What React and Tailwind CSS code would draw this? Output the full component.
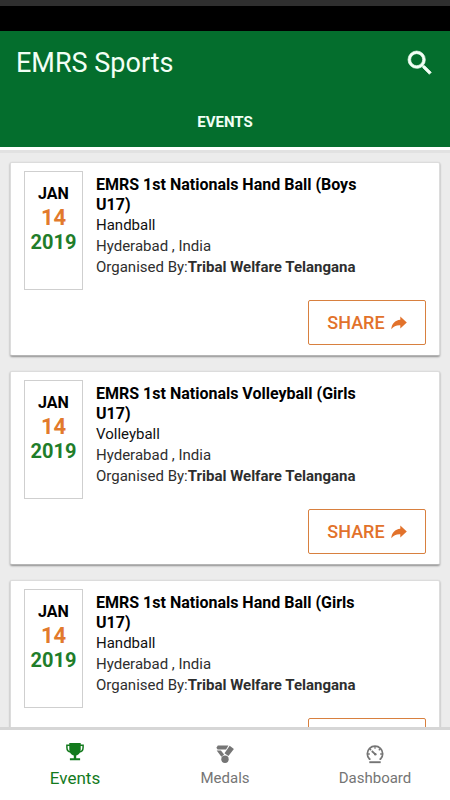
import React from 'react';

const events = [
  {
    id: 1,
    title: 'EMRS 1st Nationals Hand Ball (Boys U17)',
    sport: 'Handball',
    place: 'Hyderabad , India',
    organiser: 'Tribal Welfare Telangana',
    date: { month: 'JAN', day: '14', year: '2019' },
  },
  {
    id: 2,
    title: 'EMRS 1st Nationals Volleyball (Girls U17)',
    sport: 'Volleyball',
    place: 'Hyderabad , India',
    organiser: 'Tribal Welfare Telangana',
    date: { month: 'JAN', day: '14', year: '2019' },
  },
  {
    id: 3,
    title: 'EMRS 1st Nationals Hand Ball (Girls U17)',
    sport: 'Handball',
    place: 'Hyderabad , India',
    organiser: 'Tribal Welfare Telangana',
    date: { month: 'JAN', day: '14', year: '2019' },
  },
];

const SearchIcon = () => (
  <svg className="w-8 h-8" viewBox="0 0 24 24" fill="currentColor" stroke="currentColor" strokeWidth="0.5" aria-hidden="true">
    <path d="M15.5 14h-.79l-.28-.27A6.47 6.47 0 0 0 16 9.5 6.5 6.5 0 1 0 9.5 16c1.61 0 3.09-.59 4.23-1.57l.27.28v.79l5 4.99L20.49 19l-4.99-5zm-6 0a4.5 4.5 0 1 1 0-9 4.5 4.5 0 0 1 0 9z" />
  </svg>
);

const ShareIcon = () => (
  <svg className="w-4 h-4" viewBox="0 0 16 16" fill="currentColor" aria-hidden="true">
    <path d="M9.300 1.500l6.500 6-6.500 6v-3.300C5.500 10 2.600 11 .300 14.300.700 8.700 4 5.200 9.300 4.700z" />
  </svg>
);

const TrophyIcon = () => (
  <svg className="w-5 h-5" viewBox="0 0 20 20" fill="currentColor" aria-hidden="true">
    <path d="M4.300 1h11.400v6.500c0 3-2.200 5.500-4.500 6v2.700h3.900v2.100H4.900v-2.100h3.900v-2.700c-2.300-.5-4.500-3-4.500-6z" />
    <path
      fill="none"
      stroke="currentColor"
      strokeWidth="1.500"
      d="M5 3.200H1.900v2.300c0 2.600 1.500 4.200 4 4.600M15 3.200h3.100v2.300c0 2.600-1.500 4.200-4 4.600"
    />
  </svg>
);

const MedalIcon = () => (
  <svg className="w-5 h-5" viewBox="0 0 20 20" fill="currentColor" aria-hidden="true">
    <path d="M2.800 1.500h10.600l-2.300 3.900H2.600L1.400 3.700z" />
    <path d="M14.700 1.700l4.200 3.400-5.500 6.900-3.900-2.800z" />
    <path d="M1.700 6.400h4.200l3.200 4.200-2.700 2.200z" />
    <circle cx="10" cy="15.300" r="3.700" />
  </svg>
);

const GaugeIcon = () => (
  <svg className="w-5 h-5" viewBox="0 0 20 20" fill="none" stroke="currentColor" aria-hidden="true">
    <path strokeWidth="1.700" d="M5.500 15.200h-1a7.700 7.700 0 1 1 11 0h-1" />
    <path strokeWidth="1.300" d="M10 2.500v2.300M2.500 10h2.300M17.500 10h-2.300M4.700 4.700l1.500 1.500M15.300 4.700l-1.500 1.500" />
    <path strokeWidth="1.800" d="M6.800 7l3.600 3.400" />
    <circle cx="10.300" cy="10.300" r="1.300" fill="currentColor" stroke="none" />
    <path strokeWidth="1.900" d="M4.300 18.200h11.400" />
  </svg>
);

const Header = () => (
  <header className="shrink-0 bg-[#046e2d] text-[#f2fff5] border-b-3 border-white">
    <div className="flex items-center justify-between pl-4 pr-3 h-16">
      <h1 className="text-[27px] leading-8">EMRS Sports</h1>
      <button type="button" aria-label="Search" className="p-0.5">
        <SearchIcon />
      </button>
    </div>
    <nav className="flex justify-center h-13 pt-0.5">
      <a href="#events" className="flex items-center text-[15px] font-bold">EVENTS</a>
    </nav>
  </header>
);

const EventCard = ({ event }) => {
  const { title, sport, place, organiser, date } = event;

  return (
    <article className="shrink-0 bg-white rounded-xs px-[13px] pt-2 pb-2.5 border border-[#dcdcdc] border-b-[#b5b5b5] shadow-[0_1px_2px_rgba(0,0,0,0.4)]">
      <div className="flex items-start gap-[13px]">
        <div className="w-[59px] h-[119px] shrink-0 pt-2.5 border border-[#cfcfcf] text-center font-bold">
          <div className="text-base leading-6 text-black">{date.month}</div>
          <div className="text-[22px] leading-6 text-[#e27a2c]">{date.day}</div>
          <div className="text-[20px] leading-6 text-[#1f7d2a]">{date.year}</div>
        </div>
        <div className="pt-1 pr-12 text-[15px] leading-[21px] text-[#2e2e2e]">
          <h2 className="text-base leading-5 font-bold text-black">{title}</h2>
          <p className="text-[#111111]">{sport}</p>
          <p>{place}</p>
          <p>Organised By:<b>{organiser}</b></p>
        </div>
      </div>
      <div className="flex justify-end mt-2.5">
        <button
          type="button"
          className="flex items-center justify-center gap-1.5 w-[118px] h-[45px] border border-[#d8803f] rounded-xs text-lg font-medium text-[#e2722b]"
        >
          SHARE
          <ShareIcon />
        </button>
      </div>
    </article>
  );
};

const BottomNav = () => (
  <nav className="shrink-0 grid grid-cols-3 h-[73px] bg-white border-t-3 border-[#d6d6d6] text-[#757575]">
    <a href="#events" aria-current="page" className="flex flex-col items-center gap-1 pt-3 text-[#137a1d]">
      <TrophyIcon />
      <span className="text-[17px] leading-6">Events</span>
    </a>
    <a href="#medals" className="flex flex-col items-center gap-1 pt-3.5">
      <MedalIcon />
      <span className="text-[15px] leading-5">Medals</span>
    </a>
    <a href="#dashboard" className="flex flex-col items-center gap-1 pt-3.5">
      <GaugeIcon />
      <span className="text-[15px] leading-5">Dashboard</span>
    </a>
  </nav>
);

const App = () => {
  return (
    <div className="flex flex-col h-screen font-[Roboto,sans-serif] bg-[#ececec]">
      {/* System status bar */}
      <div className="shrink-0 h-[31px] bg-black border-t-6 border-[#2f2f2f]" />
      <Header />
      <main className="flex-1 min-h-0 overflow-y-auto [scrollbar-width:none] flex flex-col gap-[15px] px-2.5 pt-[9px] pb-4 border-t-3 border-[#e2e2e2]">
        {events.map((event) => (
          <EventCard key={event.id} event={event} />
        ))}
      </main>
      <BottomNav />
    </div>
  );
};

export default App;
